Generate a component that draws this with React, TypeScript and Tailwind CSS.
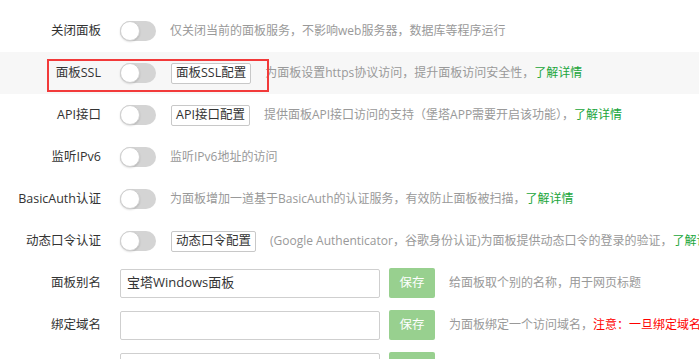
import React from 'react'

const font = { fontFamily: '"Open Sans", "Noto Sans CJK SC", sans-serif' }

function Toggle() {
  return <div className="relative w-[36px] h-[20px] rounded-full bg-[#d4d4d4] shrink-0">
    <div className="absolute left-0 top-0 w-[20px] h-[20px] rounded-full bg-white border border-[#d0d0d0] shadow-[0_1px_2px_rgba(0,0,0,0.15)]" />
  </div>
}

function CfgBtn({ text }: { text: string }) {
  return <button className="h-[21px] px-[4px] border border-[#c8c8c8] rounded-[2px] bg-white text-[12.5px] text-[#333] leading-none shrink-0 ml-[15px]">{text}</button>
}

const More = () => <span className="text-[#20a53a]">了解详情</span>

function Row({ label, btn, desc, band, children }: { label: string, btn?: string, desc: React.ReactNode, band?: boolean, children?: React.ReactNode }) {
  return <div className={`relative flex items-center h-[42px] ${band ? 'bg-[#f7f7f7]' : ''}`}>
    <div className="w-[101px] text-right text-[12.5px] text-[#333] shrink-0">{label}</div>
    <div className="ml-[19px]"><Toggle /></div>
    {btn && <CfgBtn text={btn} />}
    <div className="ml-[14px] text-[12px] text-[#999]">{desc}</div>
    {children}
  </div>
}

function InputRow({ label, value, desc }: { label: string, value: string, desc: React.ReactNode }) {
  return <div className="flex items-center h-[42px]">
    <div className="w-[101px] text-right text-[12.5px] text-[#333] shrink-0">{label}</div>
    <div className="ml-[19px] w-[260px] h-[29px] border border-[#cfcfcf] rounded-[2px] bg-white flex items-center px-[6px] text-[13px] text-[#333] shrink-0">{value}</div>
    <button className="ml-[9px] w-[46px] h-[30px] rounded-[2px] bg-[#98d08f] text-white text-[12.5px] shrink-0">保存</button>
    <div className="ml-[14px] text-[12px] text-[#999]">{desc}</div>
  </div>
}

export default function App() {
  return (
    <div className="w-[699px] h-[359px] overflow-hidden bg-white whitespace-nowrap pt-[10px]" style={font}>
      <Row label="关闭面板" desc="仅关闭当前的面板服务，不影响web服务器，数据库等程序运行" />
      <Row label="面板SSL" btn="面板SSL配置" band desc={<>为面板设置https协议访问，提升面板访问安全性，<More /></>}>
        <div className="absolute left-[47px] top-[7px] w-[222px] h-[33px] border-[2.5px] border-[#f23a3a] pointer-events-none" />
      </Row>
      <Row label="API接口" btn="API接口配置" desc={<>提供面板API接口访问的支持（堡塔APP需要开启该功能），<More /></>} />
      <Row label="监听IPv6" desc="监听IPv6地址的访问" />
      <Row label="BasicAuth认证" desc={<>为面板增加一道基于BasicAuth的认证服务，有效防止面板被扫描，<More /></>} />
      <Row label="动态口令认证" btn="动态口令配置" desc={<>(Google Authenticator，谷歌身份认证)为面板提供动态口令的登录的验证，<More /></>} />
      <InputRow label="面板别名" value="宝塔Windows面板" desc="给面板取个别的名称，用于网页标题" />
      <InputRow label="绑定域名" value="" desc={<>为面板绑定一个访问域名，<span className="text-[#ff0000]">注意：一旦绑定域名，只能通过域名访问面板！</span></>} />
      <InputRow label="" value="" desc="" />
    </div>
  )
}
